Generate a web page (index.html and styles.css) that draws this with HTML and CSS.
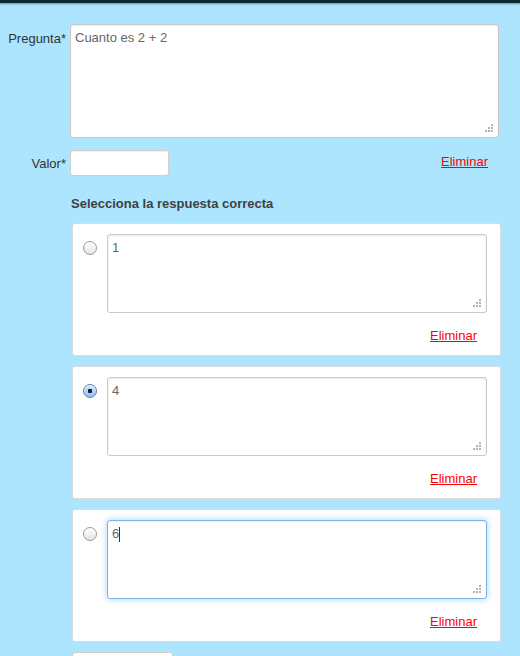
FILE: index.html
```html
<!DOCTYPE html>
<html lang="es">
<head>
<meta charset="utf-8">
<title>Pregunta</title>
<link rel="stylesheet" href="styles.css">
</head>
<body>
<div class="topbar"></div>
<form class="form">
  <div class="row">
    <label class="lbl lbl-top">Pregunta*</label>
    <div class="ta-wrap">
      <textarea class="ta ta-big">Cuanto es 2 + 2</textarea>
      <span class="grip"><svg width="8" height="8" viewBox="0 0 8 8"><rect x="6" y="0" width="2" height="2"/><rect x="3" y="3" width="2" height="2"/><rect x="6" y="3" width="2" height="2"/><rect x="0" y="6" width="2" height="2"/><rect x="3" y="6" width="2" height="2"/><rect x="6" y="6" width="2" height="2"/></svg></span>
    </div>
  </div>
  <div class="row-valor">
    <label class="lbl">Valor*</label>
    <input class="inp" type="text">
    <a class="del del-top" href="#">Eliminar</a>
  </div>
  <div class="answers">
    <h3 class="heading">Selecciona la respuesta correcta</h3>
    <div class="card">
      <div class="card-body">
        <input class="radio" type="radio" name="ok">
        <div class="ta-wrap">
          <textarea class="ta ta-ans">1</textarea>
          <span class="grip"><svg width="8" height="8" viewBox="0 0 8 8"><rect x="6" y="0" width="2" height="2"/><rect x="3" y="3" width="2" height="2"/><rect x="6" y="3" width="2" height="2"/><rect x="0" y="6" width="2" height="2"/><rect x="3" y="6" width="2" height="2"/><rect x="6" y="6" width="2" height="2"/></svg></span>
        </div>
      </div>
      <div class="card-foot"><a class="del" href="#">Eliminar</a></div>
    </div>
    <div class="card">
      <div class="card-body">
        <input class="radio" type="radio" name="ok" checked>
        <div class="ta-wrap">
          <textarea class="ta ta-ans">4</textarea>
          <span class="grip"><svg width="8" height="8" viewBox="0 0 8 8"><rect x="6" y="0" width="2" height="2"/><rect x="3" y="3" width="2" height="2"/><rect x="6" y="3" width="2" height="2"/><rect x="0" y="6" width="2" height="2"/><rect x="3" y="6" width="2" height="2"/><rect x="6" y="6" width="2" height="2"/></svg></span>
        </div>
      </div>
      <div class="card-foot"><a class="del" href="#">Eliminar</a></div>
    </div>
    <div class="card">
      <div class="card-body">
        <input class="radio" type="radio" name="ok">
        <div class="ta-wrap">
          <textarea class="ta ta-ans ta-focus">6</textarea>
          <span class="caret"></span>
          <span class="grip"><svg width="8" height="8" viewBox="0 0 8 8"><rect x="6" y="0" width="2" height="2"/><rect x="3" y="3" width="2" height="2"/><rect x="6" y="3" width="2" height="2"/><rect x="0" y="6" width="2" height="2"/><rect x="3" y="6" width="2" height="2"/><rect x="6" y="6" width="2" height="2"/></svg></span>
        </div>
      </div>
      <div class="card-foot"><a class="del" href="#">Eliminar</a></div>
    </div>
    <button class="add" type="button"></button>
  </div>
</form>
</body>
</html>
```

FILE: styles.css
```css
html, body {
  margin: 0;
  padding: 0;
}
body {
  background: #ade4fe;
  font-family: "Liberation Sans", Arial, Helvetica, sans-serif;
  font-size: 13px;
  line-height: 18px;
  color: #333;
  overflow: hidden;
}
.topbar {
  height: 3px;
  background: #072a33;
  box-shadow: 0 1px 2px rgba(0, 40, 60, 0.45);
}
.form {
  padding-top: 21px;
}
.row {
  display: flex;
  gap: 4px;
}
.lbl {
  width: 66px;
  text-align: right;
  color: #333;
  flex: none;
}
.lbl-top {
  padding-top: 6px;
}
.ta-wrap {
  position: relative;
  display: flex;
}
.ta {
  box-sizing: border-box;
  border: 1px solid #c9c9c9;
  border-radius: 3px;
  background: #fff;
  box-shadow: inset 0 1px 2px rgba(0, 0, 0, 0.09);
  padding: 4px 5px 4px 4px;
  margin: 0;
  font-family: inherit;
  font-size: 13px;
  line-height: 18px;
  color: #666;
  resize: none;
  outline: none;
  overflow: hidden;
}
.ta-big {
  width: 429px;
  height: 114px;
}
.ta-ans {
  width: 380px;
  height: 79px;
}
.ta-focus {
  border-color: #78b6ef;
  box-shadow: inset 0 1px 2px rgba(0, 0, 0, 0.06), 0 0 6px rgba(92, 170, 240, 0.55);
}
.grip {
  position: absolute;
  right: 6px;
  bottom: 6px;
  width: 8px;
  height: 8px;
  display: flex;
}
.grip svg {
  fill: #b4b4b4;
}
.caret {
  position: absolute;
  left: 12px;
  top: 7px;
  width: 1px;
  height: 15px;
  background: #333;
}
.row-valor {
  display: flex;
  align-items: flex-start;
  gap: 4px;
  width: 488px;
  margin-top: 12px;
}
.row-valor .lbl {
  padding-top: 5px;
}
.inp {
  box-sizing: border-box;
  width: 99px;
  height: 26px;
  margin: 0;
  border: 1px solid #cfcfcf;
  border-radius: 3px;
  background: #fff;
  box-shadow: inset 0 1px 1px rgba(0, 0, 0, 0.06);
  padding: 0 5px;
  outline: none;
}
.del {
  color: #ff0000;
  text-decoration: underline;
  font-size: 13px;
}
.del-top {
  margin-left: auto;
  padding-top: 3px;
}
.answers {
  margin-left: 70px;
  margin-top: 19px;
}
.heading {
  margin: 0 0 10px 1px;
  font-size: 13px;
  line-height: 18px;
  font-weight: bold;
  color: #404040;
}
.card {
  box-sizing: border-box;
  width: 429px;
  margin-left: 2px;
  margin-bottom: 10px;
  background: #fff;
  border: 1px solid #dcdcdc;
  border-radius: 3px;
  padding: 10px 13px 10px 10px;
}
.card-body {
  display: flex;
  align-items: flex-start;
}
.radio {
  appearance: none;
  -webkit-appearance: none;
  box-sizing: border-box;
  width: 14px;
  height: 14px;
  margin: 7px 10px 0 0;
  border-radius: 50%;
  border: 1px solid #9a9a9a;
  background: linear-gradient(#ffffff, #e4e4e4);
  box-shadow: inset 0 1px 1px rgba(255, 255, 255, 0.8);
  position: relative;
  flex: none;
}
.radio:checked {
  border-color: #5d7fb0;
  background: radial-gradient(circle at 50% 50%, #10203a 0 2px, transparent 2.5px), linear-gradient(#d2e8fc, #8fc0f0);
}
.card-foot {
  margin-top: 14px;
  text-align: right;
  padding-right: 10px;
}
.add {
  box-sizing: border-box;
  display: block;
  width: 101px;
  height: 30px;
  margin: 1px 0 0 2px;
  background: #fff;
  border: 1px solid #cfcfcf;
  border-radius: 3px;
}
```
